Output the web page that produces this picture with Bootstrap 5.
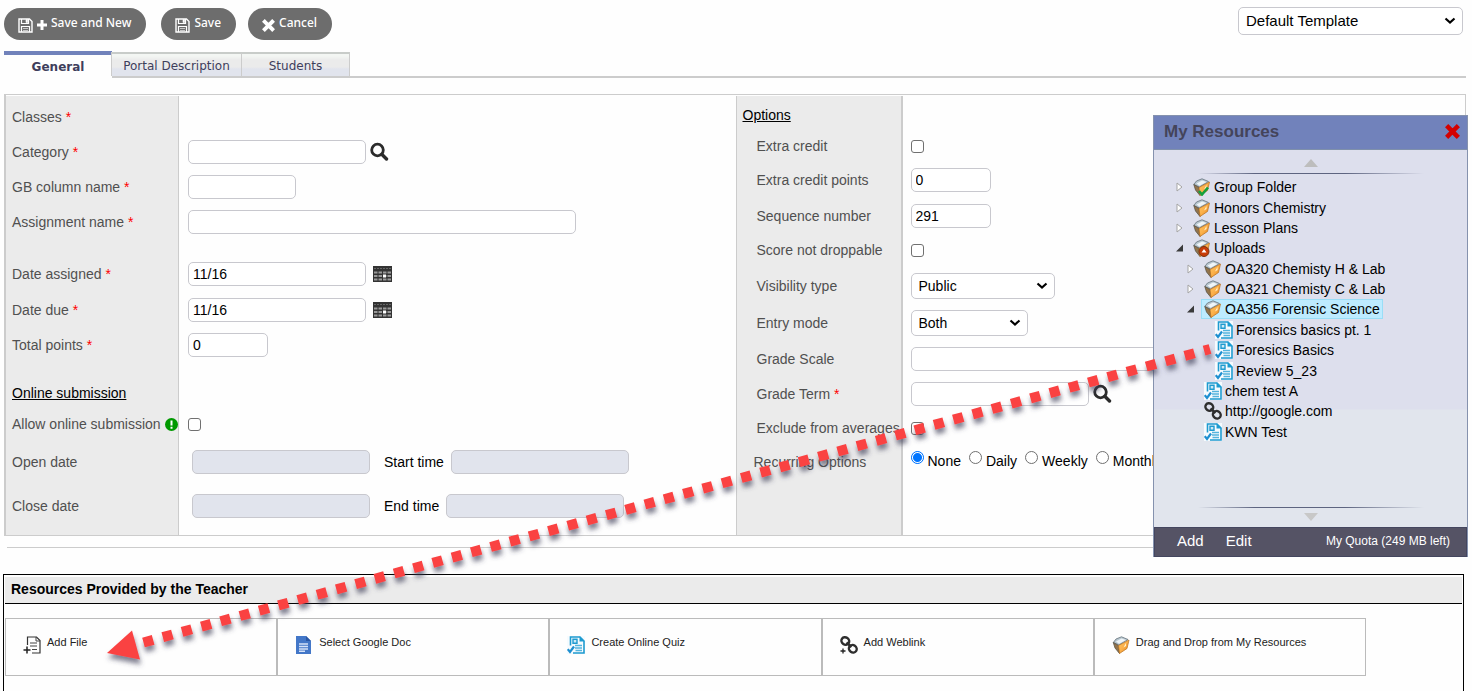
<!DOCTYPE html>
<html lang="en">
<head>
<meta charset="utf-8">
<meta name="viewport" content="width=device-width, initial-scale=1">
<title>New Assignment</title>
<link href="https://cdn.jsdelivr.net/npm/bootstrap@5.3.0/dist/css/bootstrap.min.css" rel="stylesheet">
<style>
  body { font-family: "Liberation Sans", Arial, sans-serif; font-size: 14px; line-height: 16px; color: #000; background: #fefefe; }
  .page { min-height: 100vh; padding: 8px 6px 0 4px; overflow: hidden; }
  svg { flex: none; }

  /* toolbar */
  .toolbar { height: 32px; }
  .btn-pill { height: 32px; border: 0; border-radius: 16px; background: #6d6d6d; color: #fff; font: 500 12px/16px "Noto Sans", sans-serif; padding: 0 15px 3px 14px; }
  .btn-pill:hover { background: #5a5a5a; color: #fff; }
  .btn-pill svg { margin-top: 5px; }
  .btn-save { margin-left: 15px; }
  .btn-cancel { margin-left: 12px; }

  /* tabs */
  .tabs { margin-top: 11px; height: 27px; border-bottom: 2px solid #ccc; }
  .tabs .nav-link { border: 1px solid #ccc; border-top: 2px solid #c8ccc9; border-bottom: 0; border-radius: 0; height: 24px; margin: 1px 0 0 -1px; padding: 3px 0 0; text-align: center; font: 12px/18px "DejaVu Sans", sans-serif; color: #3e3e5c; background: linear-gradient(#f3f6f3 0 2px, #ebebeb 6px 13px, #e1e4ed 15px); }
  .tabs .nav-link.active { width: 108px; height: 27px; margin: 0; padding-top: 3px; border: 0; border-top: 4px solid #7182bb; background: #fefefe; font-weight: bold; color: #3e3e5c; }
  .tab-wide { width: 131px; }
  .tab-std { width: 109px; }

  /* form */
  .form-box { margin-top: 16px; border: 1px solid #ccc; border-left-width: 2px; height: 442px; padding-top: 1px; }
  .half { padding-top: 4px; }
  .half-left { background: linear-gradient(90deg, #ebebeb 172px, #ccc 172px 173px, transparent 173px); }
  .half-right { border-left: 1px solid #ccc; background: linear-gradient(90deg, #ebebeb 164px, #ccc 164px 166px, transparent 166px); }
  .field { display: flex; align-items: center; white-space: nowrap; }
  .field > .lbl { flex: none; color: #505050; }
  .half-left .lbl { width: 182px; padding-left: 6px; }
  .half-right .lbl { width: 174px; padding-left: 20px; }
  .half .lbl.lbl-head { color: #000; padding-left: 6px; text-decoration: underline; }
  .half-right .lbl.lbl-out { padding-left: 17px; }
  .h-30 { height: 30px; } .h-32 { height: 32px; } .h-34 { height: 34px; } .h-35 { height: 35px; }
  .h-36 { height: 36px; } .h-37 { height: 37px; } .h-44 { height: 44px; }
  .gap-top { margin-top: 17px; }
  .req { color: #f00; }
  .form-control, .form-select { border: 1px solid #c8c8ce; border-radius: 5px; background-color: #fff; color: #000; font-size: 14px; line-height: 16px; }
  .form-control { height: 24px; padding: 0 4px; }
  .form-control:disabled { background: #e1e4ed; }
  .form-select { height: 26px; padding: 0 24px 0 7px; background-image: url("data:image/svg+xml,%3Csvg xmlns='http://www.w3.org/2000/svg' viewBox='0 0 12 8'%3E%3Cpath d='M1.500 1.500 6 5.500 10.500 1.500' fill='none' stroke='%23000' stroke-width='2.200'/%3E%3C/svg%3E"); background-size: 12px 8px; background-position: right 6px center; }
  .template-select { width: 225px; height: 28px; font-size: 15px; margin: 0 3px 6px 0; }
  .time-label { padding: 0 7px 0 14px; }
  .w-xs { width: 80px; } .w-sm { width: 108px; } .w-md { width: 178px; } .w-lg { width: 388px; }
  .w-vis { width: 144px; } .w-entry { width: 117px; }
  .form-check-input { width: 13px; height: 13px; margin: 0; border: 1px solid #707070; background-color: #fff; }
  .form-check-input[type=checkbox] { border-radius: 3px; }
  .form-check-input[type=radio]:checked { border-color: #0075ff; background-image: radial-gradient(#0075ff 0 4px, #fff 5px); }
  .radio-item { display: flex; margin: 0 8px 4px 0; }
  .radio-item label { margin: 2px 0 0 4px; }
  .radio-item .form-check-input { margin-top: 0; }
  .icon-btn { border: 0; background: none; padding: 0; display: flex; margin-left: 4px; }
  .icon-btn.cal { margin-left: 7px; }
  .rule { border-top: 1px solid #ccc; margin: 11px 0 0 3px; }

  /* teacher resources */
  .provided { margin: 26px 2px 0 -1px; border: 1px solid #000; border-bottom: 0; padding: 2px 1px 0; }
  .provided h2 { margin: 0; height: 27px; padding: 4px 6px 0; background: #ebebeb; border-bottom: 1px solid #000; font-size: 14px; line-height: 16px; font-weight: bold; }
  .tiles { margin: 14px 96px 0 0; }
  .tile { flex: 1 1 0; height: 58px; padding: 15px 0 0 17px; border: 1px solid #bbb; color: #222; font-size: 11px; line-height: 16px; text-decoration: none; display: flex; align-items: flex-start; background: #fefefe; }
  .tile span { margin-left: 6px; }
  .tile svg { margin-top: 2px; }

  /* resources window */
  .res-window { position: absolute; top: 37px; right: -2px; width: 315px; height: 442px; border: 1px solid #8592ae; background: linear-gradient(#dddfed 293px, #e1e5ed 294px); }
  .res-head { height: 34px; background: #7182bb; border-bottom: 1px solid #7f90ab; padding: 0 7px 2px 10px; }
  .res-head h2 { margin: 0; font-size: 17px; line-height: 20px; font-weight: bold; color: #44445a; }
  .res-head button { border: 0; background: none; padding: 0; display: flex; }
  .res-line { height: 1px; width: 226px; margin: 0 auto; background: linear-gradient(90deg, transparent, #5d6480 25% 65%, transparent); }
  .scroll-btn { display: block; border: 0; background: none; padding: 0; width: 16px; height: 8px; margin: 9px auto 6px; line-height: 0; }
  .scroll-btn.down { margin-top: 5px; }
  .tree { display: grid; grid-auto-rows: 1fr; height: 265px; margin: 3px 0 65px; padding: 0; list-style: none; }
  .tree li { display: flex; align-items: center; padding-left: 22px; }
  .tree li.lv1 { padding-left: 33px; }
  .tree li.lv2 { padding-left: 44px; }
  .tree .twist { width: 7px; margin-right: 7px; display: flex; }
  .node { display: flex; align-items: center; color: #000; text-decoration: none; height: 20px; border: 1px solid transparent; padding: 0 2px; }
  .node svg { margin-right: 4px; }
  .node .leaf { margin-right: 3px; }
  .node.chosen { background: #bdebff; border-color: #99def7; }
  .res-foot { height: 30px; background: #555365; border: 1px solid #44465f; padding: 0 16px 3px 22px; color: #fff; font-size: 15px; gap: 22px; }
  .res-foot a { color: #fff; text-decoration: none; }
  .quota { font-size: 12px; margin-left: auto; }
  .pointer { position: absolute; top: 0; left: 0; pointer-events: none; }
</style>
</head>
<body>
<svg width="0" height="0" class="position-absolute" aria-hidden="true">
  <defs>
    <linearGradient id="gold" x1="0" y1="0" x2="1" y2="1"><stop offset="0" stop-color="#ffc35c"/><stop offset=".5" stop-color="#fbb04a"/><stop offset="1" stop-color="#e07c12"/></linearGradient>
  </defs>
  <symbol id="i-disk" viewBox="0 0 15 15"><path d="M1 1h10.500L14 3.500V14H1z" fill="none" stroke="#fff" stroke-width="1.400"/><path d="M3.500 1v4.500h7V1M3.500 14V8.500h8V14" fill="none" stroke="#fff" stroke-width="1.200"/><path d="M8 1.500h1.600v3H8zM5 10.500h5M5 12.500h5" fill="#fff" stroke="#fff" stroke-width=".6"/></symbol>
  <symbol id="i-plus" viewBox="0 0 10 10"><path d="M5 0v10M0 5h10" stroke="#fff" stroke-width="3"/></symbol>
  <symbol id="i-cross" viewBox="0 0 14 14"><path d="M3 3l8 8M11 3l-8 8" stroke="currentColor" stroke-width="4.200" stroke-linecap="square"/></symbol>
  <symbol id="i-search" viewBox="0 0 19 19"><circle cx="7.500" cy="8" r="5.800" fill="none" stroke="#2b2b2b" stroke-width="2.800"/><path d="M12 12.500l4.500 4.500" stroke="#2b2b2b" stroke-width="3.400" stroke-linecap="round"/></symbol>
  <symbol id="i-cal" viewBox="0 0 19 16"><path d="M0 0h19v16H0z" fill="#333"/><path d="M1 2.500h17" stroke="#666" stroke-width="1" stroke-dasharray="2 1"/><path d="M1 6.500h17M1 10h17M1 13.500h17" stroke="#999" stroke-width="2.200" stroke-dasharray="3.500 1"/><path d="M10 8.500h3v3h-3z" fill="#fff"/></symbol>
  <symbol id="i-folder" viewBox="0 0 17 18"><path d="M.8 6.500L3.500 3 9 .8l6.500 2.700L6.500 9z" fill="#b9c8d1" stroke="#67737c" stroke-width=".8"/><path d="M3.500 5.500L9 2.500l4.500 1.600-7 3.700z" fill="#eef4f7"/><path d="M.8 6.500L6 9.500 7 17.500 2.500 12z" fill="#92744c" stroke="#5c5548" stroke-width=".8"/><path d="M6 9.500L16.500 4 14.500 12.500 7 17.500z" fill="url(#gold)" stroke="#b9701c" stroke-width=".7"/><path d="M11 11.500l2.500-4.500v3z" fill="#fff2cd"/></symbol>
  <symbol id="i-quiz" viewBox="0 0 18 18"><path d="M0 0h18v18H0z" fill="#f6fbfe"/><path d="M3.500 9.500V1H13l4 4v12H6" fill="none" stroke="#1e9bd0" stroke-width="1.600"/><path d="M12.500 .5v5h5z" fill="#1e9bd0"/><path d="M6 3.200h4v4H6z" fill="#cfeaf6" stroke="#1e9bd0" stroke-width="1.400"/><path d="M8 9.500h7M8 12h7M8.500 14.500H15" stroke="#54b4dd" stroke-width="1.400"/><path d="M.8 13.200L3 16l4-5.500" fill="none" stroke="#1e8fd0" stroke-width="2.200"/></symbol>
  <symbol id="i-link" viewBox="0 0 18 18"><g fill="none" stroke="#2e2e2e" stroke-width="2.400"><ellipse cx="5.300" cy="5" rx="4" ry="3.600" transform="rotate(35 5.300 5)"/><ellipse cx="12.800" cy="12.800" rx="4" ry="3.600" transform="rotate(35 12.800 12.800)"/><path d="M6.500 6.500l5 4.500"/></g></symbol>
  <symbol id="i-file" viewBox="0 0 18 18"><path d="M4.500 9V1h9L17 4.500V17H9" fill="none" stroke="#333" stroke-width="1.200"/><path d="M13 1v4h4M7 7h7M7 10h7M9 13.500h5" fill="none" stroke="#444"/><path d="M4 10.500v7M.5 14h7" stroke="#222" stroke-width="1.500"/></symbol>
  <symbol id="i-doc" viewBox="0 0 18 18"><path d="M1 0h10l5 5v13H1z" fill="#4377c8"/><path d="M11 0v5h5z" fill="#2b58a5"/><path d="M4 8h9M4 10.500h9M4 13h9M4 15.300h6" stroke="#d5e2f8" stroke-width="1.500"/></symbol>
  <symbol id="i-closed" viewBox="0 0 7 10"><path d="M1 1l5 4-5 4z" fill="#fff" stroke="#a5a5a5"/></symbol>
  <symbol id="i-open" viewBox="0 0 7 10"><path d="M7 1.500v7H0z" fill="#3a3a3a"/></symbol>
</svg>

<div class="page position-relative d-flex flex-column">
  <header class="toolbar d-flex align-items-center">
    <button type="button" class="btn btn-pill d-flex align-items-center"><svg width="15" height="15"><use href="#i-disk"/></svg><svg width="10" height="10" class="ms-1 me-1"><use href="#i-plus"/></svg>Save and New</button>
    <button type="button" class="btn btn-pill btn-save d-flex align-items-center"><svg width="15" height="15" class="me-1"><use href="#i-disk"/></svg>Save</button>
    <button type="button" class="btn btn-pill btn-cancel d-flex align-items-center"><svg width="13" height="13" class="me-1"><use href="#i-cross"/></svg>Cancel</button>
    <select class="form-select template-select ms-auto" aria-label="Template"><option>Default Template</option></select>
  </header>

  <nav class="tabs nav flex-nowrap" aria-label="Assignment sections">
    <a class="nav-link active" href="#general" aria-current="page">General</a>
    <a class="nav-link tab-wide" href="#portal">Portal Description</a>
    <a class="nav-link tab-std" href="#students">Students</a>
  </nav>

  <main class="position-relative" id="general">
    <form class="form-box row g-0">
      <div class="col-6 half half-left">
        <div class="field h-34"><span class="lbl">Classes <span class="req">*</span></span></div>
        <div class="field h-35"><label class="lbl" for="cat">Category <span class="req">*</span></label><input id="cat" class="form-control w-md"><button type="button" class="icon-btn" aria-label="Find category"><svg width="19" height="19"><use href="#i-search"/></svg></button></div>
        <div class="field h-35"><label class="lbl" for="gb">GB column name <span class="req">*</span></label><input id="gb" class="form-control w-sm"></div>
        <div class="field h-35"><label class="lbl" for="an">Assignment name <span class="req">*</span></label><input id="an" class="form-control w-lg"></div>
        <div class="field h-36 gap-top"><label class="lbl" for="da">Date assigned <span class="req">*</span></label><input id="da" class="form-control w-md" value="11/16"><button type="button" class="icon-btn cal" aria-label="Pick date assigned"><svg width="19" height="16"><use href="#i-cal"/></svg></button></div>
        <div class="field h-36"><label class="lbl" for="dd">Date due <span class="req">*</span></label><input id="dd" class="form-control w-md" value="11/16"><button type="button" class="icon-btn cal" aria-label="Pick date due"><svg width="19" height="16"><use href="#i-cal"/></svg></button></div>
        <div class="field h-34"><label class="lbl" for="tp">Total points <span class="req">*</span></label><input id="tp" class="form-control w-xs" value="0"></div>
        <div class="field h-30 mt-3"><span class="lbl lbl-head">Online submission</span></div>
        <div class="field h-32"><label class="lbl d-flex align-items-center" for="ao">Allow online submission <svg class="ms-1" width="13" height="13" viewBox="0 0 13 13"><circle cx="6.500" cy="6.500" r="6.500" fill="#090"/><path d="M6.500 2.500v5M6.500 8.800v2" stroke="#fff" stroke-width="2"/></svg></label><input id="ao" type="checkbox" class="form-check-input"></div>
        <div class="field h-44"><label class="lbl me-1" for="od">Open date</label><input id="od" class="form-control w-md" disabled><label class="time-label" for="st">Start time</label><input id="st" class="form-control w-md" disabled></div>
        <div class="field h-44"><label class="lbl me-1" for="cd">Close date</label><input id="cd" class="form-control w-md" disabled><label class="time-label" for="et">End time</label><input id="et" class="form-control w-md" disabled></div>
      </div>
      <div class="col-6 half half-right">
        <div class="field h-30"><span class="lbl lbl-head">Options</span></div>
        <div class="field h-32"><label class="lbl" for="ec">Extra credit</label><input id="ec" type="checkbox" class="form-check-input"></div>
        <div class="field h-36"><label class="lbl" for="ep">Extra credit points</label><input id="ep" class="form-control w-xs" value="0"></div>
        <div class="field h-35"><label class="lbl" for="sn">Sequence number</label><input id="sn" class="form-control w-xs" value="291"></div>
        <div class="field h-34"><label class="lbl" for="nd">Score not droppable</label><input id="nd" type="checkbox" class="form-check-input"></div>
        <div class="field h-37"><label class="lbl" for="vt">Visibility type</label><select id="vt" class="form-select w-vis"><option>Public</option></select></div>
        <div class="field h-37"><label class="lbl" for="em">Entry mode</label><select id="em" class="form-select w-entry"><option>Both</option></select></div>
        <div class="field h-35"><label class="lbl" for="gs">Grade Scale</label><input id="gs" class="form-control w-lg"></div>
        <div class="field h-35"><label class="lbl" for="gt">Grade Term <span class="req">*</span></label><input id="gt" class="form-control w-md"><button type="button" class="icon-btn" aria-label="Find grade term"><svg width="19" height="19"><use href="#i-search"/></svg></button></div>
        <div class="field h-34"><label class="lbl" for="ea">Exclude from averages</label><input id="ea" type="checkbox" class="form-check-input"></div>
        <div class="field h-34"><span class="lbl lbl-out">Recurring Options</span>
          <span class="radio-item"><input type="radio" class="form-check-input" name="rec" id="r1" checked><label for="r1">None</label></span>
          <span class="radio-item"><input type="radio" class="form-check-input" name="rec" id="r2"><label for="r2">Daily</label></span>
          <span class="radio-item"><input type="radio" class="form-check-input" name="rec" id="r3"><label for="r3">Weekly</label></span>
          <span class="radio-item"><input type="radio" class="form-check-input" name="rec" id="r4"><label for="r4">Monthly</label></span>
        </div>
      </div>
    </form>

    <aside class="res-window" aria-label="My Resources">
      <div class="res-head d-flex align-items-center justify-content-between"><h2>My Resources</h2><button type="button" aria-label="Close"><svg width="15" height="15" color="#d40000"><use href="#i-cross"/></svg></button></div>
      <button type="button" class="scroll-btn" aria-label="Scroll up"><svg width="16" height="8"><path d="M1 8l7-8 7 8z" fill="#bdbdbd"/></svg></button>
      <div class="res-line"></div>
      <ul class="tree">
        <li><span class="twist"><svg width="7" height="10"><use href="#i-closed"/></svg></span><a class="node" href="#n1"><svg width="17" height="18" viewBox="0 0 17 18"><use href="#i-folder" width="17" height="18"/><path d="M6 13l3 3.500 6-7" fill="none" stroke="#13a03c" stroke-width="2.600"/></svg>Group Folder</a></li>
        <li><span class="twist"><svg width="7" height="10"><use href="#i-closed"/></svg></span><a class="node" href="#n2"><svg width="17" height="18"><use href="#i-folder"/></svg>Honors Chemistry</a></li>
        <li><span class="twist"><svg width="7" height="10"><use href="#i-closed"/></svg></span><a class="node" href="#n3"><svg width="17" height="18"><use href="#i-folder"/></svg>Lesson Plans</a></li>
        <li><span class="twist"><svg width="7" height="10"><use href="#i-open"/></svg></span><a class="node" href="#n4"><svg width="17" height="18" viewBox="0 0 17 18"><use href="#i-folder" width="17" height="18"/><circle cx="11" cy="12.500" r="5" fill="#c83c08" stroke="#7b3410"/><path d="M8.500 13.500L11 10l2.500 3.500z" fill="#fff"/></svg>Uploads</a></li>
        <li class="lv1"><span class="twist"><svg width="7" height="10"><use href="#i-closed"/></svg></span><a class="node" href="#n5"><svg width="17" height="18"><use href="#i-folder"/></svg>OA320 Chemisty H &amp; Lab</a></li>
        <li class="lv1"><span class="twist"><svg width="7" height="10"><use href="#i-closed"/></svg></span><a class="node" href="#n6"><svg width="17" height="18"><use href="#i-folder"/></svg>OA321 Chemisty C &amp; Lab</a></li>
        <li class="lv1"><span class="twist"><svg width="7" height="10"><use href="#i-open"/></svg></span><a class="node chosen" href="#n7"><svg width="17" height="18"><use href="#i-folder"/></svg>OA356 Forensic Science</a></li>
        <li class="lv2"><span class="twist"></span><a class="node" href="#n8"><svg class="leaf" width="18" height="18"><use href="#i-quiz"/></svg>Forensics basics pt. 1</a></li>
        <li class="lv2"><span class="twist"></span><a class="node" href="#n9"><svg class="leaf" width="18" height="18"><use href="#i-quiz"/></svg>Foresics Basics</a></li>
        <li class="lv2"><span class="twist"></span><a class="node" href="#n10"><svg class="leaf" width="18" height="18"><use href="#i-quiz"/></svg>Review 5_23</a></li>
        <li class="lv1"><span class="twist"></span><a class="node" href="#n11"><svg class="leaf" width="18" height="18"><use href="#i-quiz"/></svg>chem test A</a></li>
        <li class="lv1"><span class="twist"></span><a class="node" href="#n12"><svg class="leaf" width="18" height="18"><use href="#i-link"/></svg>http://google.com</a></li>
        <li class="lv1"><span class="twist"></span><a class="node" href="#n13"><svg class="leaf" width="18" height="18"><use href="#i-quiz"/></svg>KWN Test</a></li>
      </ul>
      <div class="res-line"></div>
      <button type="button" class="scroll-btn down" aria-label="Scroll down"><svg width="16" height="8"><path d="M1 0h14L8 8z" fill="#c8c8c8"/></svg></button>
      <div class="res-foot d-flex align-items-center"><a href="#add">Add</a><a href="#edit">Edit</a><span class="quota">My Quota (249 MB left)</span></div>
    </aside>
  </main>

  <div class="rule"></div>

  <section class="provided flex-grow-1">
    <h2>Resources Provided by the Teacher</h2>
    <div class="tiles d-flex">
      <a class="tile" href="#file"><svg width="18" height="18"><use href="#i-file"/></svg><span>Add File</span></a>
      <a class="tile" href="#gdoc"><svg width="18" height="18"><use href="#i-doc"/></svg><span>Select Google Doc</span></a>
      <a class="tile" href="#quiz"><svg width="18" height="18"><use href="#i-quiz"/></svg><span>Create Online Quiz</span></a>
      <a class="tile" href="#weblink"><svg width="18" height="18" viewBox="0 0 18 18"><use href="#i-link" width="18" height="18"/><path d="M3 12.500v5M.5 15h5" stroke="#222" stroke-width="1.300"/></svg><span>Add Weblink</span></a>
      <a class="tile" href="#drag"><svg width="18" height="18"><use href="#i-folder"/></svg><span>Drag and Drop from My Resources</span></a>
    </div>
  </section>

  <!-- arrow from the quiz in My Resources to the Add File tile -->
  <svg class="pointer" width="1472" height="691" viewBox="0 0 1472 691" aria-hidden="true">
    <defs><filter id="shade" x="-5%" y="-5%" width="110%" height="115%"><feDropShadow dx="1" dy="5" stdDeviation="2.500" flood-color="#3c4058" flood-opacity=".65"/></filter></defs>
    <g filter="url(#shade)"><path d="M143.500 642.500L1210 349" stroke="#fa4242" stroke-width="10" stroke-dasharray="10 10" fill="none"/><path d="M107 653l25-22.500 8 29z" fill="#fa4242"/></g>
  </svg>
</div>
<script src="https://cdn.jsdelivr.net/npm/bootstrap@5.3.0/dist/js/bootstrap.bundle.min.js"></script>
</body>
</html>
